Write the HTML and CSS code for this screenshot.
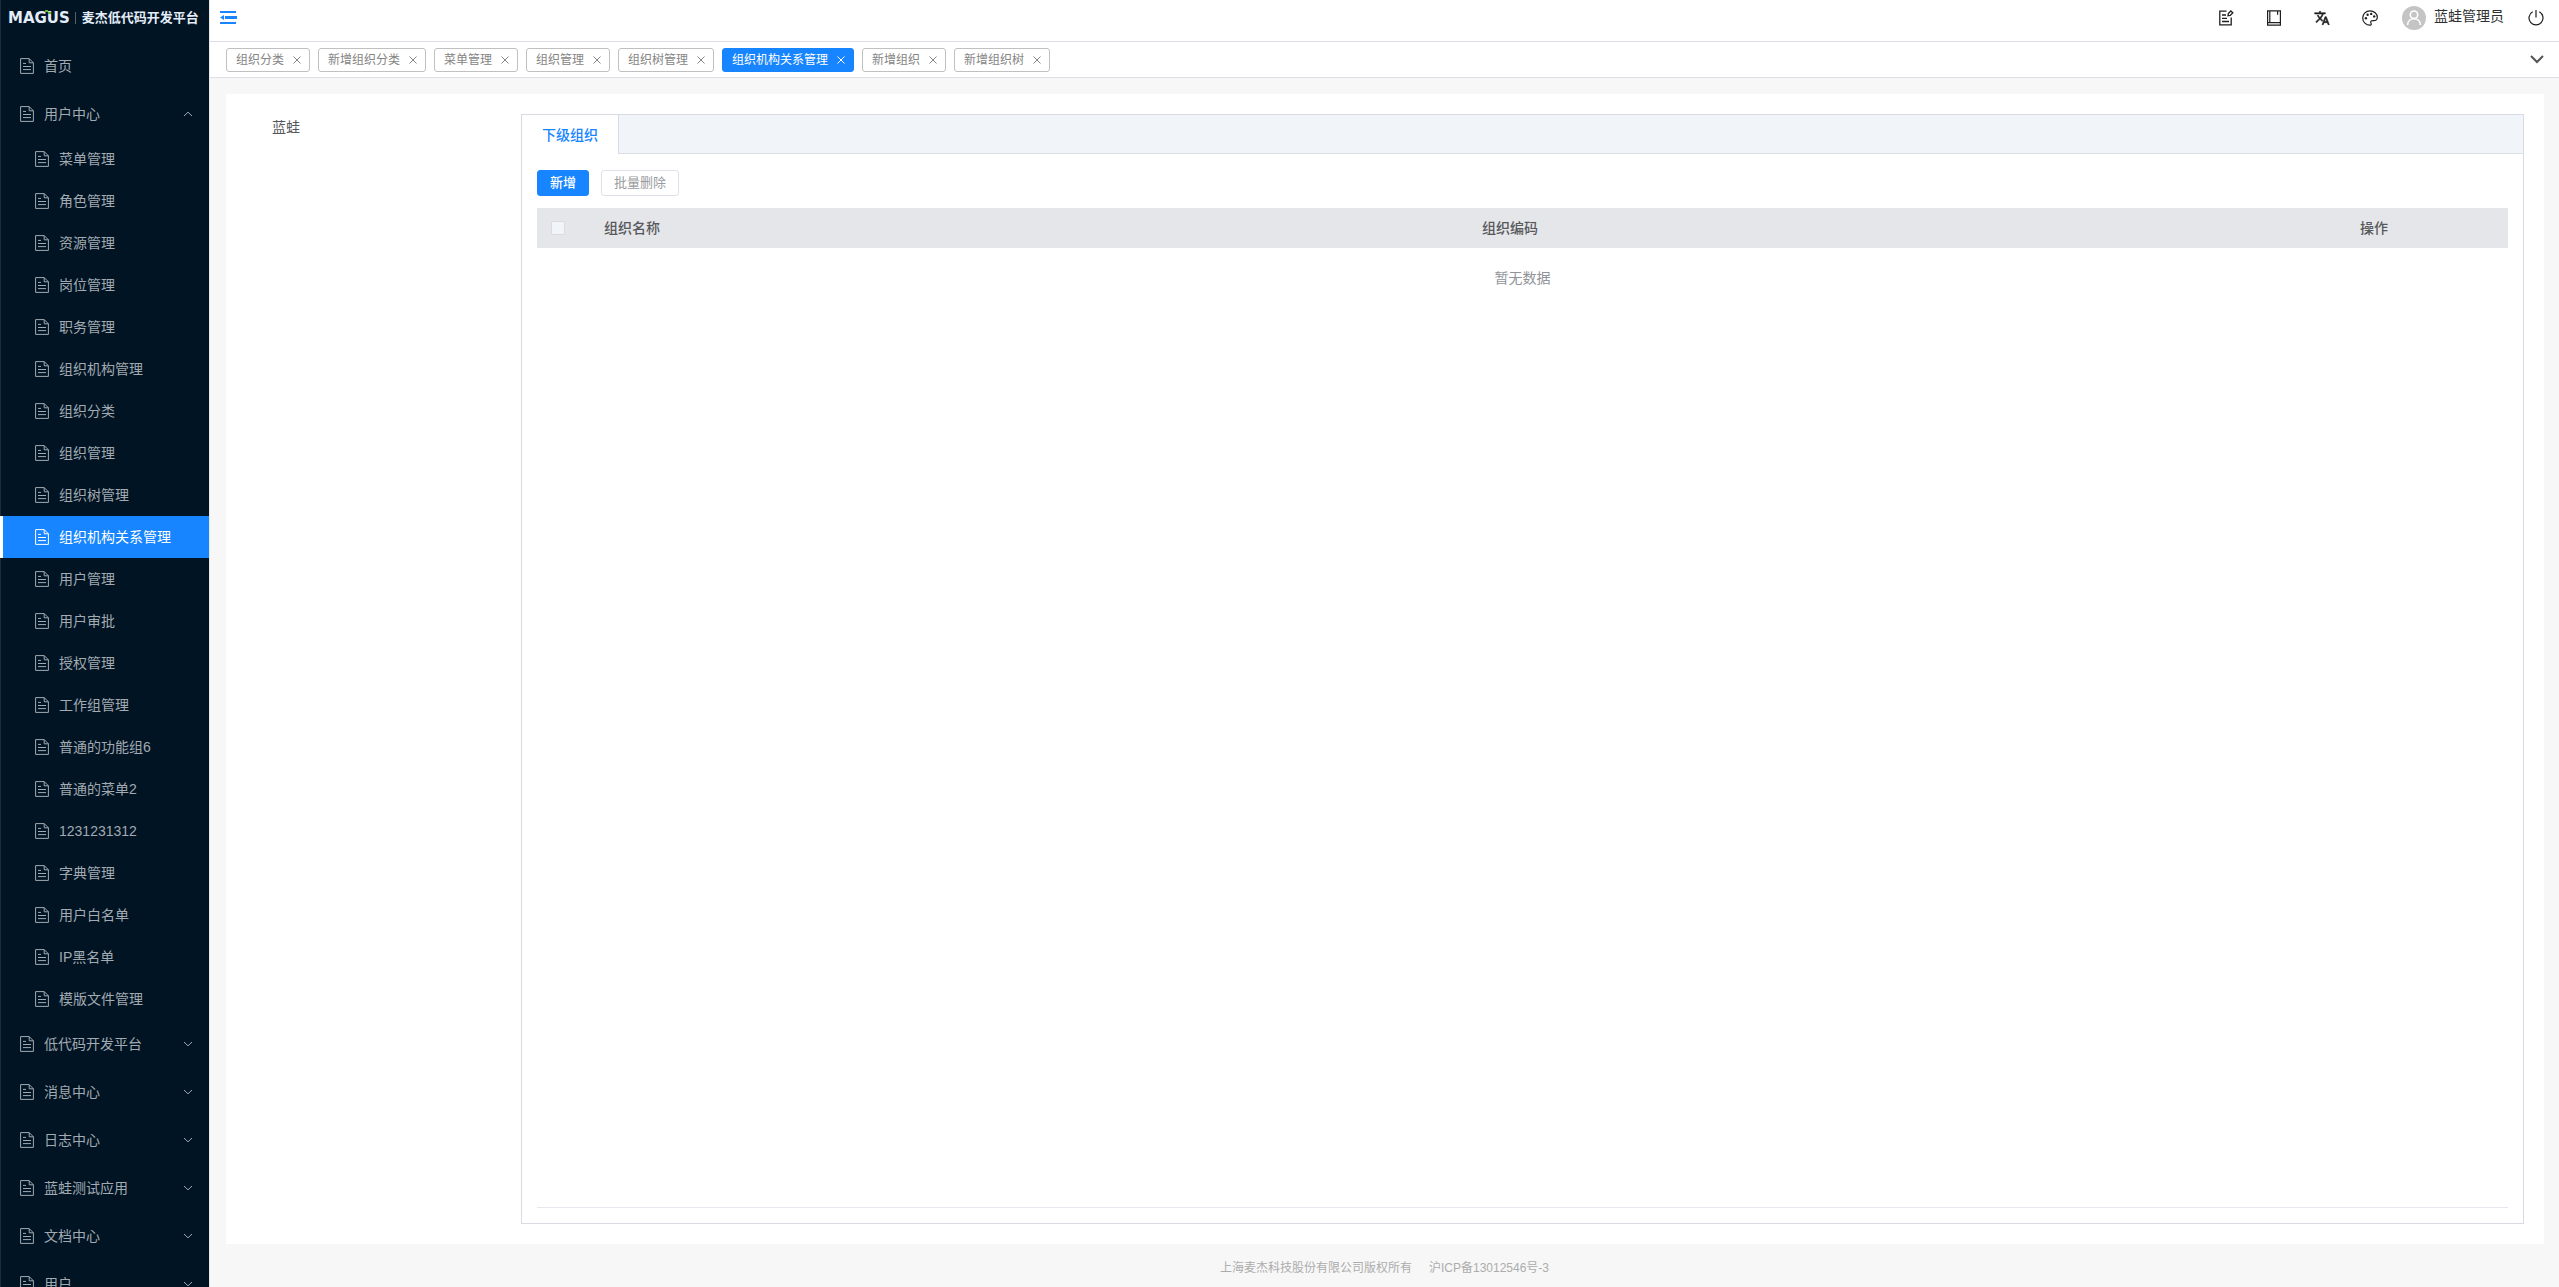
FILE: index.html
```html
<!DOCTYPE html>
<html lang="zh-CN">
<head>
<meta charset="utf-8">
<title>组织机构关系管理</title>
<link rel="stylesheet" href="styles.css">
</head>
<body>
<svg class="sprite" aria-hidden="true">
  <symbol id="doc" viewBox="0 0 14 16"><path d="M.6.6h8.6l4.2 4.2v10.6H.6zM9.2.6v4.2h4.2M3 5.4h3M3 8.5h8M3 11.6h8" fill="none" stroke="currentColor" stroke-width="1"/></symbol>
  <symbol id="down" viewBox="0 0 10 6"><path d="M1 1l4 3.8L9 1" fill="none" stroke="currentColor"/></symbol>
  <symbol id="up" viewBox="0 0 10 6"><path d="M1 5l4-3.8L9 5" fill="none" stroke="currentColor"/></symbol>
  <symbol id="close" viewBox="0 0 8 8"><path d="M.5.5l7 7M7.5.5l-7 7" fill="none" stroke="currentColor" stroke-width="1"/></symbol>
</svg>
<div class="app">
  <aside class="sidebar">
    <div class="logo"><span class="logo-mark">MAGUS<svg class="logo-dots" viewBox="0 0 6 5"><path d="M0 0h3v2H0zM3 2h3v2H3z" fill="#5cb82c"/></svg></span><span class="logo-name">麦杰低代码开发平台</span></div>
    <nav class="menu">
      <a class="item" href="#"><svg class="doc"><use href="#doc"/></svg>首页</a>
      <button class="item" type="button"><svg class="doc"><use href="#doc"/></svg>用户中心<svg class="arrow"><use href="#up"/></svg></button>
      <div class="submenu">
        <a class="sub" href="#"><svg class="doc"><use href="#doc"/></svg>菜单管理</a>
        <a class="sub" href="#"><svg class="doc"><use href="#doc"/></svg>角色管理</a>
        <a class="sub" href="#"><svg class="doc"><use href="#doc"/></svg>资源管理</a>
        <a class="sub" href="#"><svg class="doc"><use href="#doc"/></svg>岗位管理</a>
        <a class="sub" href="#"><svg class="doc"><use href="#doc"/></svg>职务管理</a>
        <a class="sub" href="#"><svg class="doc"><use href="#doc"/></svg>组织机构管理</a>
        <a class="sub" href="#"><svg class="doc"><use href="#doc"/></svg>组织分类</a>
        <a class="sub" href="#"><svg class="doc"><use href="#doc"/></svg>组织管理</a>
        <a class="sub" href="#"><svg class="doc"><use href="#doc"/></svg>组织树管理</a>
        <a class="sub active" href="#"><svg class="doc"><use href="#doc"/></svg>组织机构关系管理</a>
        <a class="sub" href="#"><svg class="doc"><use href="#doc"/></svg>用户管理</a>
        <a class="sub" href="#"><svg class="doc"><use href="#doc"/></svg>用户审批</a>
        <a class="sub" href="#"><svg class="doc"><use href="#doc"/></svg>授权管理</a>
        <a class="sub" href="#"><svg class="doc"><use href="#doc"/></svg>工作组管理</a>
        <a class="sub" href="#"><svg class="doc"><use href="#doc"/></svg>普通的功能组6</a>
        <a class="sub" href="#"><svg class="doc"><use href="#doc"/></svg>普通的菜单2</a>
        <a class="sub" href="#"><svg class="doc"><use href="#doc"/></svg>1231231312</a>
        <a class="sub" href="#"><svg class="doc"><use href="#doc"/></svg>字典管理</a>
        <a class="sub" href="#"><svg class="doc"><use href="#doc"/></svg>用户白名单</a>
        <a class="sub" href="#"><svg class="doc"><use href="#doc"/></svg>IP黑名单</a>
        <a class="sub" href="#"><svg class="doc"><use href="#doc"/></svg>模版文件管理</a>
      </div>
      <button class="item" type="button"><svg class="doc"><use href="#doc"/></svg>低代码开发平台<svg class="arrow"><use href="#down"/></svg></button>
      <button class="item" type="button"><svg class="doc"><use href="#doc"/></svg>消息中心<svg class="arrow"><use href="#down"/></svg></button>
      <button class="item" type="button"><svg class="doc"><use href="#doc"/></svg>日志中心<svg class="arrow"><use href="#down"/></svg></button>
      <button class="item" type="button"><svg class="doc"><use href="#doc"/></svg>蓝蛙测试应用<svg class="arrow"><use href="#down"/></svg></button>
      <button class="item" type="button"><svg class="doc"><use href="#doc"/></svg>文档中心<svg class="arrow"><use href="#down"/></svg></button>
      <button class="item" type="button"><svg class="doc"><use href="#doc"/></svg>用户<svg class="arrow"><use href="#down"/></svg></button>
    </nav>
  </aside>
  <div class="main">
    <header class="topbar">
      <button class="icon-btn fold" type="button" aria-label="收起菜单"><svg width="17" height="14" viewBox="0 0 17 14"><path d="M0 0h16v2H0zM5 5h12v3H5zM0 11h16v2H0zM4 4v5L0 6.500z" fill="currentColor"/></svg></button>
      <div class="tools">
        <button class="icon-btn" type="button" aria-label="编辑"><svg width="16" height="16" viewBox="0 0 16 16" fill="none" stroke="currentColor" stroke-width="1.300"><path d="M8.500 1.200H1.800v13.600h11.400V7.500M4 5h4M4 8.300h5M4 11.500h7M10 5.800l.3-2.200L12.800 1l2 1.800-2.500 2.600z"/></svg></button>
        <button class="icon-btn" type="button" aria-label="文档"><svg width="16" height="16" viewBox="0 0 16 16" fill="none" stroke="currentColor" stroke-width="1.200"><path d="M1.600.8h12.800v14.400H1.600zM3.800.8v11.700M1.600 12.600h12.800M11.600.8v4"/></svg></button>
        <button class="icon-btn" type="button" aria-label="语言"><svg width="16" height="16" viewBox="0 0 24 24" fill="currentColor"><path d="M12.900 15.100l-2.600-2.500.1-.1A17.500 17.500 0 0 0 14.100 6H17V4h-7V2H8v2H1v2h11.200A15.700 15.700 0 0 1 9 11.400 15.600 15.600 0 0 1 6.700 8h-2a17.600 17.600 0 0 0 3 4.600l-5.100 5L4 19l5-5 3.100 3.100zM18.500 10h-2L12 22h2l1.100-3h4.800l1.100 3h2zm-2.600 7l1.600-4.300 1.600 4.300z" stroke="currentColor" stroke-width=".8"/></svg></button>
        <button class="icon-btn" type="button" aria-label="主题"><svg width="16" height="16" viewBox="0 0 16 16" fill="none" stroke="currentColor" stroke-width="1.200"><path d="M8.500 15.200C4 15.400.7 12 .7 8 .7 4 4 .8 8 .8s7.300 3 7.300 6.400c0 2.300-1.500 3.600-3.600 3.500-2-.2-3.600.4-2.800 2.200.5 1 .6 2-.4 2.300z"/><g fill="currentColor" stroke="none"><circle cx="3.900" cy="8.200" r="1.200"/><circle cx="5.600" cy="4.800" r="1.200"/><circle cx="9.200" cy="3.900" r="1.200"/><circle cx="12.200" cy="6.400" r="1.200"/></g></svg></button>
        <a class="user" href="#"><svg width="24" height="24" viewBox="0 0 24 24"><circle cx="12" cy="12" r="12" fill="#c4c4c4"/><g fill="none" stroke="#fff" stroke-width="1.600"><circle cx="12" cy="8.700" r="3.700"/><path d="M5.600 19c0-8.400 12.800-8.400 12.800 0"/></g></svg><span>蓝蛙管理员</span></a>
        <button class="icon-btn power" type="button" aria-label="退出"><svg width="16" height="16" viewBox="0 0 16 16" fill="none" stroke="currentColor" stroke-width="1.200"><path d="M4.700 1.800a7 7 0 1 0 6.600 0M8 0v7.500"/></svg></button>
      </div>
    </header>
    <div class="tagbar">
      <div class="tag"><a href="#">组织分类</a><button type="button" aria-label="关闭"><svg><use href="#close"/></svg></button></div>
      <div class="tag"><a href="#">新增组织分类</a><button type="button" aria-label="关闭"><svg><use href="#close"/></svg></button></div>
      <div class="tag"><a href="#">菜单管理</a><button type="button" aria-label="关闭"><svg><use href="#close"/></svg></button></div>
      <div class="tag"><a href="#">组织管理</a><button type="button" aria-label="关闭"><svg><use href="#close"/></svg></button></div>
      <div class="tag"><a href="#">组织树管理</a><button type="button" aria-label="关闭"><svg><use href="#close"/></svg></button></div>
      <div class="tag current"><a href="#">组织机构关系管理</a><button type="button" aria-label="关闭"><svg><use href="#close"/></svg></button></div>
      <div class="tag"><a href="#">新增组织</a><button type="button" aria-label="关闭"><svg><use href="#close"/></svg></button></div>
      <div class="tag"><a href="#">新增组织树</a><button type="button" aria-label="关闭"><svg><use href="#close"/></svg></button></div>
      <button class="icon-btn more" type="button" aria-label="更多"><svg width="14" height="9" viewBox="0 0 14 9"><path d="M1 1l6 6 6-6" fill="none" stroke="currentColor" stroke-width="2"/></svg></button>
    </div>
    <main class="page">
      <div class="tree"><a href="#">蓝蛙</a></div>
      <section class="card">
        <div class="card-tabs"><button class="card-tab" type="button">下级组织</button></div>
        <div class="card-body">
          <div class="actions">
            <button class="btn primary" type="button">新增</button>
            <button class="btn" type="button" disabled>批量删除</button>
          </div>
          <div class="table-wrap">
            <table>
              <colgroup><col class="col-check"><col><col><col class="col-op"></colgroup>
              <thead><tr><th class="check"><input type="checkbox" disabled aria-label="全选"></th><th>组织名称</th><th>组织编码</th><th>操作</th></tr></thead>
              <tbody><tr><td colspan="4">暂无数据</td></tr></tbody>
            </table>
          </div>
        </div>
      </section>
    </main>
    <footer class="footer"><span>上海麦杰科技股份有限公司版权所有</span><a href="#">沪ICP备13012546号-3</a></footer>
  </div>
</div>
</body>
</html>
```
FILE: styles.css
```css
* { box-sizing: border-box; }
body {
  margin: 0;
  font: 14px/20px "Liberation Sans", "Noto Sans CJK SC", sans-serif;
  color: #303133;
  background: #f7f7f7;
}
a { color: inherit; text-decoration: none; }
button { margin: 0; padding: 0; border: 0; background: none; font: inherit; color: inherit; cursor: pointer; }
svg { display: block; flex: none; }
.sprite { position: absolute; width: 0; height: 0; }
.app { display: flex; height: 100vh; overflow: hidden; }

.sidebar {
  flex: none;
  width: 210px;
  overflow: hidden;
  background: #001424;
  border-right: 1px solid #e6e8ee;
  box-shadow: inset 1px 0 #1c2c3a;
  color: #a3aab1;
}
.logo { display: flex; align-items: center; height: 42px; padding: 0 0 6px 8px; color: #e4edf8; white-space: nowrap; }
.logo-mark { position: relative; font: bold 15px/12px "DejaVu Sans", sans-serif; padding-right: 5px; border-right: 1px solid #56636f; }
.logo-dots { position: absolute; left: 37px; top: -2px; width: 6px; height: 5px; }
.logo-name { margin-left: 6px; font-size: 13px; font-weight: 700; }
.item, .sub { display: flex; align-items: center; gap: 10px; width: 100%; white-space: nowrap; }
.item { height: 48px; padding: 0 16px 0 20px; }
.sub { height: 42px; padding-left: 35px; }
.sub.active { background: #1785ff; color: #fff; box-shadow: inset 3px 0 #fff; }
.doc { width: 14px; height: 16px; }
.arrow { width: 10px; height: 6px; margin-left: auto; }

.main { flex: 1; min-width: 0; display: flex; flex-direction: column; }
.topbar {
  display: flex;
  align-items: center;
  justify-content: space-between;
  height: 42px;
  padding: 0 15px 6px 10px;
  background: #fff;
  border-bottom: 1px solid #dcdfe9;
}
.icon-btn { display: flex; align-items: center; justify-content: center; }
.fold { color: #1785ff; }
.tools { display: flex; align-items: center; gap: 32px; color: #1f1f1f; }
.user { display: flex; align-items: center; gap: 8px; margin-left: -8px; }
.user span { padding-bottom: 4px; color: #303133; }
.power { margin-left: -8px; }
.tagbar {
  display: flex;
  align-items: center;
  gap: 8px;
  height: 36px;
  padding: 0 15px 0 16px;
  background: #fff;
  border-bottom: 1px solid #dcdfe6;
  font-size: 12px;
}
.tag {
  display: flex;
  align-items: center;
  gap: 9px;
  height: 24px;
  padding: 0 8px 0 9px;
  border: 1px solid #c0c0c0;
  border-radius: 3px;
  color: #858585;
}
.tag svg { width: 8px; height: 8px; }
.tag.current { background: #1785ff; border-color: #1785ff; color: #fff; }
.more { margin-left: auto; color: #555; }

.page { flex: 1; display: flex; min-height: 0; margin: 16px 15px 0 16px; padding: 20px; background: #fff; }
.tree { flex: none; width: 275px; padding: 3px 0 0 26px; }
.tree a { color: #55575b; }
.card { flex: 1; min-width: 0; display: flex; flex-direction: column; border: 1px solid #d8dbe4; }
.card-tabs { display: flex; height: 39px; background: #f1f5f9; border-bottom: 1px solid #dcdfe6; }
.card-tab { height: 39px; padding: 0 20px; background: #fff; border-right: 1px solid #d8dbe4; color: #1785ff; font-weight: 500; }
.card-body { flex: 1; display: flex; flex-direction: column; padding: 16px 15px 15px; }
.actions { display: flex; gap: 12px; }
.btn { height: 26px; padding: 0 12px; border: 1px solid #dfe1ea; border-radius: 3px; font-size: 13px; color: #999ba0; }
.btn.primary { background: #1785ff; border-color: #1785ff; color: #fff; font-weight: 500; }
.table-wrap { flex: 1; margin-top: 12px; border-bottom: 1px solid #e6e8f0; }
table { width: 100%; table-layout: fixed; border-collapse: collapse; }
.col-check { width: 55px; }
.col-op { width: 160px; }
th { height: 40px; padding: 0 12px; background: #e5e6ea; text-align: left; font-weight: 500; color: #58595b; }
th.check { padding: 0 14px; }
th input { appearance: none; display: block; width: 14px; height: 14px; margin: 0; border: 1px solid #d8dbe2; border-radius: 2px; background: #f1f5f9; }
td { height: 60px; padding: 0; text-align: center; color: #909399; }
.footer { display: flex; justify-content: center; align-items: center; gap: 17px; height: 43px; padding-top: 4px; font-size: 12px; color: #acacac; }
```
